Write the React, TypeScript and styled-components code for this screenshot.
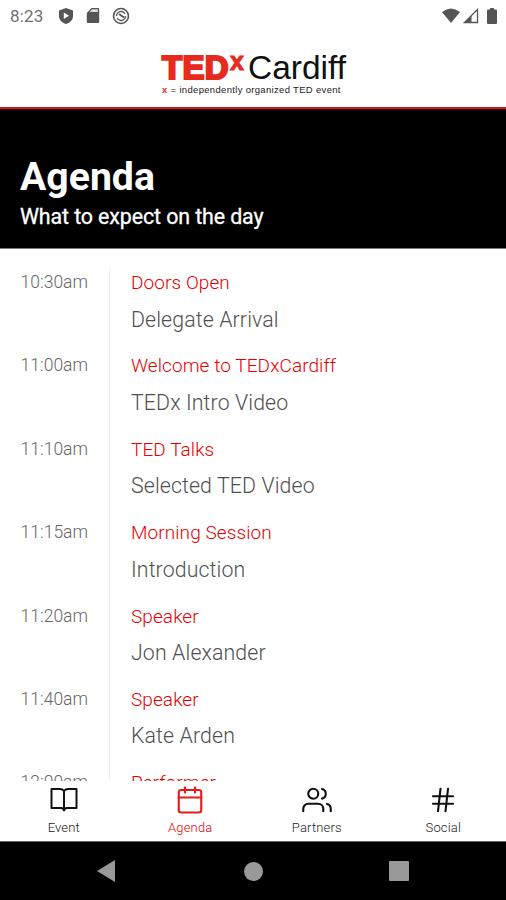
import styled, { createGlobalStyle } from "styled-components";
import { FiCalendar, FiHash, FiUsers } from "react-icons/fi";

const agenda = [
  { time: "10:30am", title: "Doors Open", detail: "Delegate Arrival" },
  { time: "11:00am", title: "Welcome to TEDxCardiff", detail: "TEDx Intro Video" },
  { time: "11:10am", title: "TED Talks", detail: "Selected TED Video" },
  { time: "11:15am", title: "Morning Session", detail: "Introduction" },
  { time: "11:20am", title: "Speaker", detail: "Jon Alexander" },
  { time: "11:40am", title: "Speaker", detail: "Kate Arden" },
  { time: "12:00am", title: "Performer", detail: "" },
];

const BookIcon = () => (
  <svg width="30" height="30" viewBox="0 0 30 30" fill="none" stroke="currentColor" strokeWidth="2" strokeLinejoin="round" strokeLinecap="round">
    <path d="M15 6Q13.500 4 11 4H2.500v19H12q2.500 0 3 2.500.5-2.500 3-2.500h9.500V4H19q-2.500 0-4 2v19" />
  </svg>
);

const tabs = [
  { label: "Event", icon: <BookIcon /> },
  { label: "Agenda", icon: <FiCalendar size={30} strokeWidth={1.700} />, active: true },
  { label: "Partners", icon: <FiUsers size={30} strokeWidth={1.700} /> },
  { label: "Social", icon: <FiHash size={30} strokeWidth={1.700} /> },
];

const App = () => {
  return (
    <Screen>
      <GlobalStyle />
      <StatusBar>
        <Clock>8:23</Clock>
        <StatusIcons>
          <svg width="16" height="18" viewBox="0 0 16 18">
            <path d="M8 1 15 3.500V9c0 4-3 6.800-7 8-4-1.200-7-4-7-8V3.500z" fill="#555" />
            <path d="M5.800 5.500v6.400L11 8.700z" fill="#fff" />
          </svg>
          <svg width="14" height="17" viewBox="0 0 14 17">
            <path d="M5.500 1H12a1.200 1.200 0 0 1 1.200 1.200v12.600A1.200 1.200 0 0 1 12 16H2a1.200 1.200 0 0 1-1.200-1.200V6z" fill="#555" />
            <path d="M6 2.300h5.800V5H3.600z" fill="#ddd" />
          </svg>
          <svg width="18" height="18" viewBox="0 0 18 18" fill="none" stroke="#555">
            <circle cx="9" cy="9" r="7.500" strokeWidth="1.600" />
            <path d="M4.500 9a4.500 4.500 0 0 1 8.500-2M13.500 9A4.500 4.500 0 0 1 5 11" strokeWidth="1.300" />
            <path d="m7 7 5 3.500" strokeWidth="2" />
          </svg>
        </StatusIcons>
        <Signals>
          <svg width="18" height="16" viewBox="0 0 18 16">
            <path d="M0 4Q9-3 18 4L9 15z" fill="#555" />
          </svg>
          <svg width="16" height="16" viewBox="0 0 16 16">
            <path d="M1.500 14.500 14.500 1.500v13z" fill="none" stroke="#555" strokeWidth="1.300" />
            <path d="M1 15 8.500 7.500V15z" fill="#555" />
          </svg>
          <svg width="10" height="16" viewBox="0 0 10 16">
            <path d="M3 0h4v1.500h2q1 0 1 1V15q0 1-1 1H1q-1 0-1-1V2.500q0-1 1-1h2z" fill="#555" />
          </svg>
        </Signals>
      </StatusBar>

      <LogoBar>
        <Logo>
          <Ted>TED</Ted>
          <LogoX>x</LogoX>
          <City>Cardiff</City>
        </Logo>
        <Tagline>
          <b>x</b> = independently organized TED event
        </Tagline>
      </LogoBar>

      <Banner>
        <h1>Agenda</h1>
        <p>What to expect on the day</p>
      </Banner>

      <Schedule>
        {agenda.map((item) => (
          <Row key={item.time}>
            <Time>{item.time}</Time>
            <Session>
              <SessionTitle>{item.title}</SessionTitle>
              <SessionDetail>{item.detail}</SessionDetail>
            </Session>
          </Row>
        ))}
      </Schedule>

      <TabBar>
        {tabs.map(({ label, icon, active }) => (
          <Tab key={label} $active={active}>
            {icon}
            <span>{label}</span>
          </Tab>
        ))}
      </TabBar>

      <SystemNav>
        <svg width="18" height="22" viewBox="0 0 18 22">
          <path d="M18 0v22L0 11z" fill="#999" />
        </svg>
        <HomeButton />
        <RecentsButton />
      </SystemNav>
    </Screen>
  );
};

export default App;

const GlobalStyle = createGlobalStyle`
  * {
    box-sizing: border-box;
  }

  body {
    margin: 0;
    background: #fff;
  }

  h1, p {
    margin: 0;
  }

  svg {
    display: block;
    flex-shrink: 0;
  }
`;

const Screen = styled.div`
  width: 506px;
  height: 900px;
  display: flex;
  flex-direction: column;
  overflow: hidden;
  background: #fff;
  font-family: Roboto, sans-serif;
`;

const StatusBar = styled.div`
  height: 31px;
  flex-shrink: 0;
  display: flex;
  align-items: center;
  padding: 0 9px 0 10px;
`;

const Clock = styled.span`
  width: 48px;
  font-size: 17px;
  letter-spacing: 0.200px;
  color: #707070;
`;

const StatusIcons = styled.div`
  display: flex;
  align-items: center;
  gap: 12px;
`;

const Signals = styled.div`
  display: flex;
  align-items: center;
  gap: 3px;
  margin-left: auto;

  svg:last-child {
    margin-left: 5px;
  }
`;

const LogoBar = styled.div`
  height: 78px;
  flex-shrink: 0;
  padding: 18px 0 0 162px;
  border-bottom: 2px solid #c51f13;
  font-family: "Liberation Sans", Arial, sans-serif;
`;

const Logo = styled.div`
  display: flex;
  height: 35px;
  line-height: 38px;
`;

const Ted = styled.span`
  width: 68px;
  font-size: 33px;
  font-weight: 700;
  letter-spacing: 0.300px;
  color: #e62b1e;
  -webkit-text-stroke: 2.200px #e62b1e;
`;

const LogoX = styled.span`
  width: 18px;
  font-size: 25px;
  font-weight: 700;
  line-height: 24px;
  color: #e62b1e;
  -webkit-text-stroke: 1px #e62b1e;
`;

const City = styled.span`
  font-size: 33.500px;
  color: #111;
`;

const Tagline = styled.div`
  font-size: 9.500px;
  letter-spacing: 0.320px;
  line-height: 11px;
  white-space: nowrap;
  color: #222;

  b {
    color: #e62b1e;
  }
`;

const Banner = styled.div`
  height: 140px;
  flex-shrink: 0;
  padding: 43px 20px 0;
  background: #000;
  border-top: 1px solid #3a0805;
  border-bottom: 1px solid #777;
  color: #fff;

  h1 {
    font-size: 39.200px;
    font-weight: 700;
    line-height: 48px;
  }

  p {
    padding-top: 1px;
    font-size: 21.400px;
    font-weight: 400;
    letter-spacing: -0.110px;
    line-height: 29px;
    -webkit-text-stroke: 0.300px #fff;
  }
`;

const Schedule = styled.div`
  height: 532px;
  flex-shrink: 0;
  padding: 19px 20px 0;
  overflow: hidden;
`;

const Row = styled.div`
  height: 83.400px;
  display: flex;
`;

const Time = styled.div`
  width: 90px;
  padding-left: 0.600px;
  border-right: 1px solid #eee;
  font-size: 17.500px;
  font-weight: 300;
  line-height: 28px;
  color: #666;
`;

const Session = styled.div`
  padding-left: 21px;
  white-space: nowrap;
`;

const SessionTitle = styled.div`
  font-size: 19px;
  font-weight: 300;
  line-height: 29px;
  letter-spacing: 0.080px;
  color: #e60000;
`;

const SessionDetail = styled.div`
  padding-top: 6.500px;
  font-size: 21.300px;
  font-weight: 300;
  line-height: 32px;
  letter-spacing: 0.120px;
  color: #505050;
`;

const TabBar = styled.div`
  height: 60px;
  flex-shrink: 0;
  display: flex;
  padding-top: 4px;
`;

const Tab = styled.div<{ $active?: boolean }>`
  flex: 1;
  display: flex;
  flex-direction: column;
  align-items: center;
  padding-left: 1px;
  color: ${({ $active }) => ($active ? "#e31b1b" : "#111")};

  span {
    padding-top: 5px;
    font-size: 13px;
    font-weight: 300;
    letter-spacing: 0.150px;
    line-height: 16px;
    color: ${({ $active }) => ($active ? "#e60000" : "#222")};
  }
`;

const SystemNav = styled.div`
  height: 59px;
  flex-shrink: 0;
  display: flex;
  align-items: center;
  justify-content: space-between;
  padding: 0 97px;
  background: #000;
  border-top: 1px solid #666;
`;

const HomeButton = styled.div`
  width: 19px;
  height: 19px;
  margin-left: 2px;
  border-radius: 50%;
  background: #999;
`;

const RecentsButton = styled.div`
  width: 20px;
  height: 20px;
  border-radius: 1px;
  background: #999;
`;
